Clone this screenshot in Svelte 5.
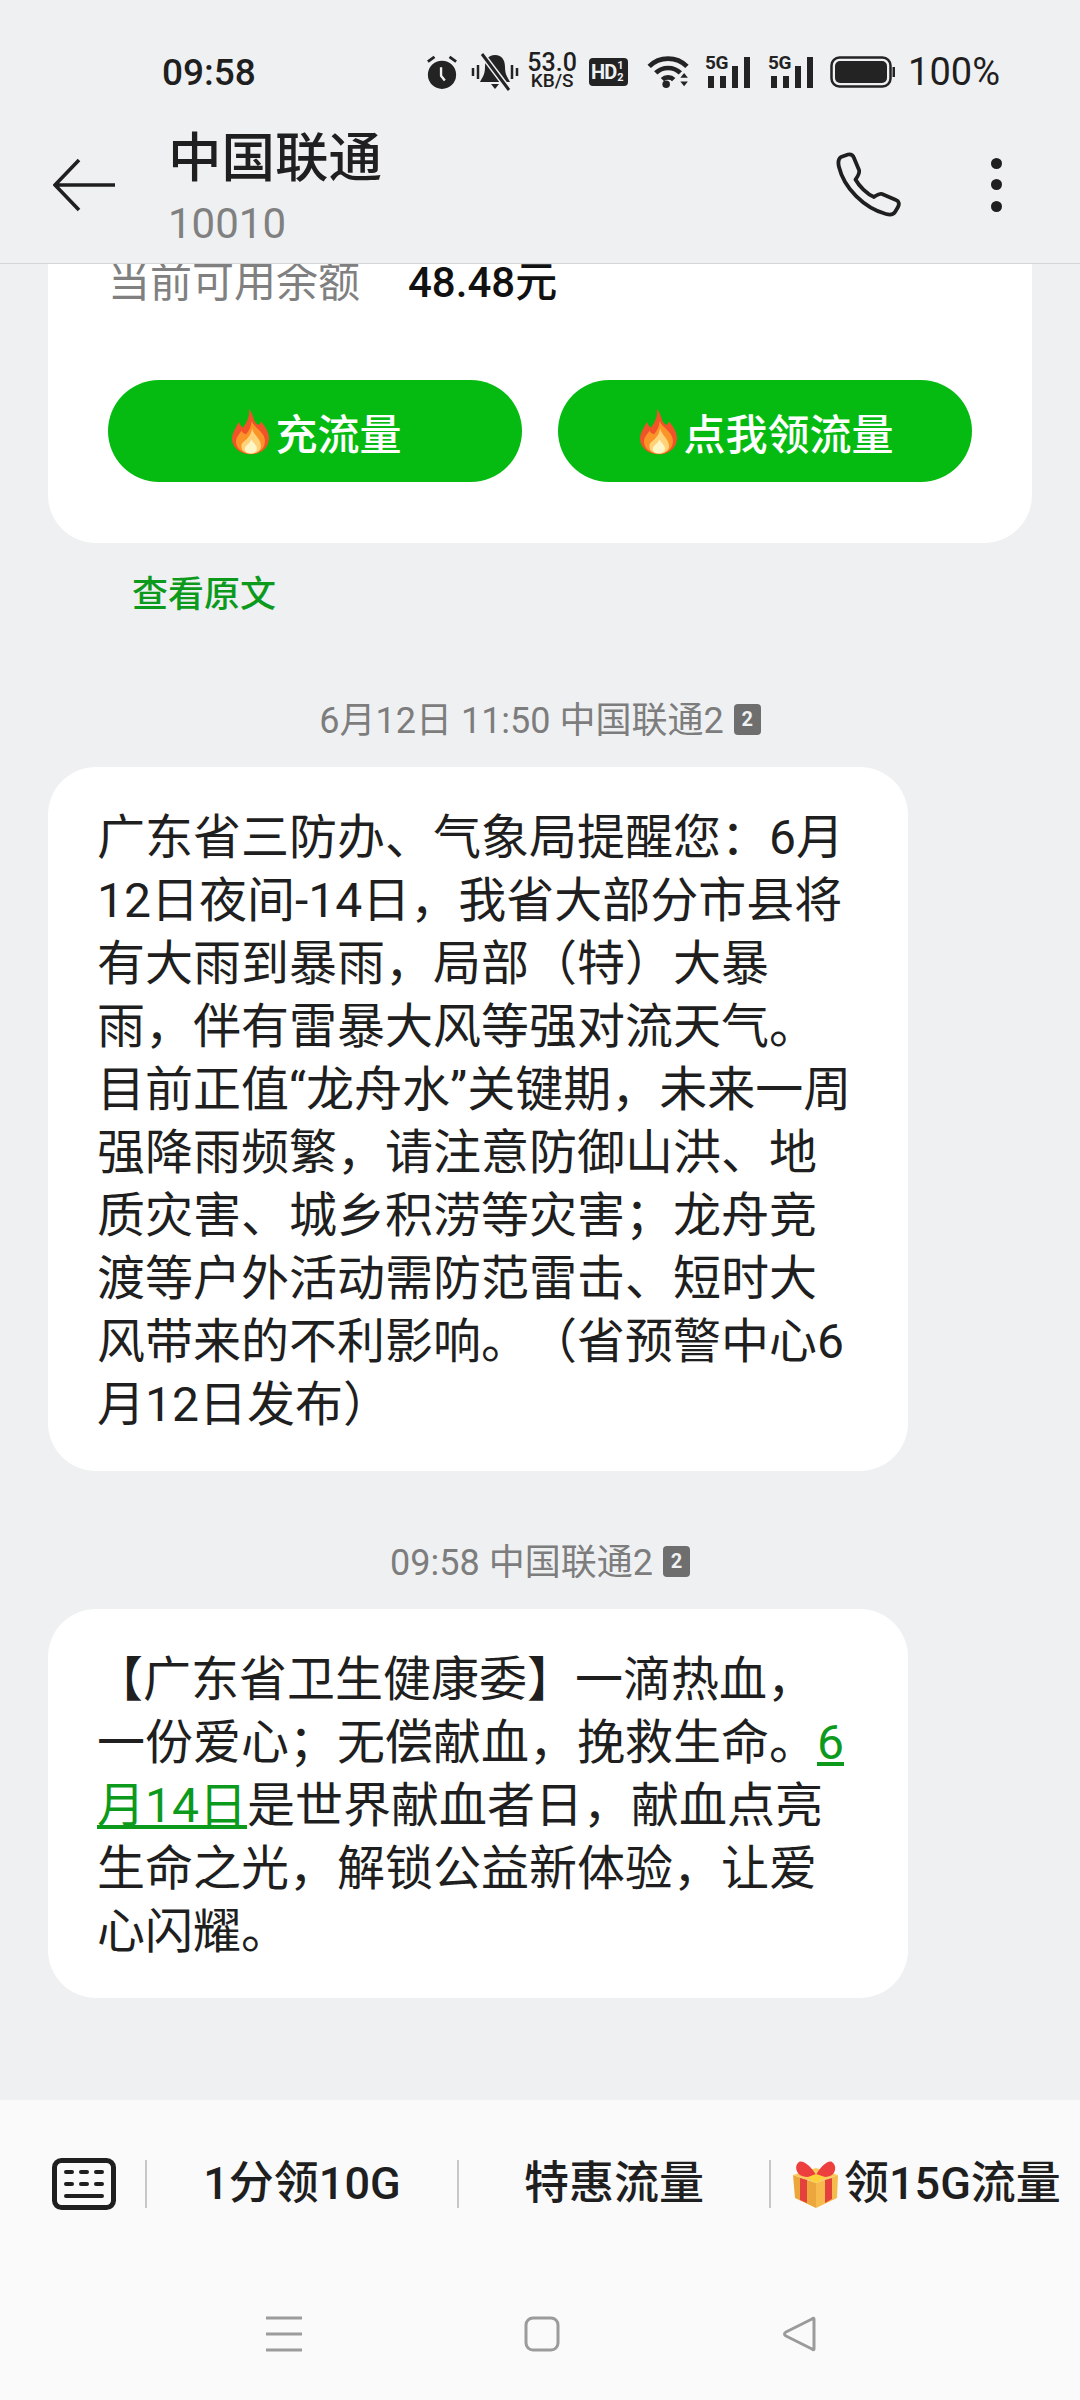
<script>
    const bubbleOne = [
        "广东省三防办、气象局提醒您：6月",
        "12日夜间-14日，我省大部分市县将",
        "有大雨到暴雨，局部（特）大暴",
        "雨，伴有雷暴大风等强对流天气。",
        "目前正值“龙舟水”关键期，未来一周",
        "强降雨频繁，请注意防御山洪、地",
        "质灾害、城乡积涝等灾害；龙舟竞",
        "渡等户外活动需防范雷击、短时大",
        "风带来的不利影响。（省预警中心6",
        "月12日发布）",
    ];
</script>

{#snippet flame()}
    <svg class="flame" viewBox="0 0 110 136" width="37" height="47">
        <path d="M50 0C66 20 62 34 74 46C80 50 84 46 86 38C100 54 111 72 110 90C108 118 84 136 56 136C26 136 2 118 0 92C-1 74 12 58 20 40C24 48 28 54 33 56C44 40 54 22 50 0Z" fill="#f0522a" />
        <path d="M58 36C64 56 98 68 98 96C98 120 78 134 56 134C32 134 12 120 12 98C12 84 22 76 28 66C32 72 36 76 42 76C50 66 58 54 58 36Z" fill="#fb9428" />
        <path d="M60 58C62 76 86 90 86 110C86 126 72 134 56 134C40 134 28 126 28 112C28 100 38 96 44 90C52 82 58 72 60 58Z" fill="#ffd27a" />
        <path d="M58 92C62 102 74 108 74 118C74 128 66 133 56 133C46 133 38 128 38 120C38 110 52 106 58 92Z" fill="#fff6c8" />
    </svg>
{/snippet}

{#snippet sim()}
    <span class="sim">2</span>
{/snippet}

{#snippet signal()}
    <span class="signal">
        <span class="five">5G</span>
        <svg viewBox="0 0 47 32" width="47" height="32">
            <rect x="4" y="20" width="6" height="12" />
            <rect x="16" y="20" width="6" height="12" />
            <rect x="28" y="10" width="6" height="22" />
            <rect x="40" y="1" width="6" height="31" />
        </svg>
    </span>
{/snippet}

<div class="phone">
    <header class="top">
        <div class="status">
            <span class="time">09:58</span>
            <div class="status-icons">
                <svg viewBox="0 0 34 36" width="32" height="34" fill="#232323">
                    <circle cx="17" cy="21" r="15" />
                    <path d="M2 7l7-5M32 7l-7-5" stroke="#232323" stroke-width="3" fill="none" />
                    <path d="M16 13v9l4 5" stroke="#f0f1f3" stroke-width="2.5" fill="none" />
                </svg>
                <svg class="bell" viewBox="0 0 48 38" width="48" height="38" fill="#232323">
                    <path d="M24 2c7 0 10 5 10 12 0 8 3 11 5 15H9c2-4 5-7 5-15 0-7 3-12 10-12z" />
                    <path d="M20 31h8l-4 5z" />
                    <path d="M11 1l27 36" stroke="#f0f1f3" stroke-width="6" />
                    <path d="M11 1l27 36" stroke="#232323" stroke-width="3" />
                    <path d="M2 15v8M7 12v14M41 12v14M46 15v8" stroke="#232323" stroke-width="2.5" />
                </svg>
                <span class="speed"><b>53.0</b><i>KB/S</i></span>
                <span class="hd">HD<span class="hd-frac"><em>1</em><em>2</em></span></span>
                <svg class="wifi" viewBox="0 0 46 36" width="44" height="34">
                    <path d="M2 12c11-11 29-11 40 0M9 19c7-7 19-7 26 0M16 26c3-3 9-3 12 0" stroke="#232323" stroke-width="5" fill="none" />
                    <circle cx="20" cy="31" r="4" fill="#232323" />
                    <path d="M35 24l4-5 4 5zM35 28l4 5 4-5z" fill="#232323" />
                </svg>
                {@render signal()}
                {@render signal()}
                <svg class="battery" viewBox="0 0 66 32" width="66" height="32">
                    <rect x="1.5" y="1.5" width="59" height="29" rx="8" fill="none" stroke="#232323" stroke-width="2.5" />
                    <rect x="5" y="5" width="52" height="22" rx="5" fill="#232323" />
                    <rect x="62.5" y="11" width="2.5" height="10" fill="#232323" />
                </svg>
                <span class="percent">100%</span>
            </div>
        </div>
        <div class="bar">
            <svg class="back" viewBox="0 0 64 54" width="64" height="54">
                <path d="M26 2L2 27l24 25M2 27h60" fill="none" stroke="#1f1f1f" stroke-width="3.6" />
            </svg>
            <div class="names">
                <div class="name">中国联通</div>
                <div class="number">10010</div>
            </div>
            <svg class="call" viewBox="0 0 66 66" width="66" height="66">
                <path d="M5 5L12 2.5C15 2 17 3 18 6L23 18C24 21 22 24 19.5 27.5C23 34 31 42 38 45C41 43 43 41 46 42L60 48C63 49 63.5 52 62 55L59 60C57.5 62.5 54 63 50 62C28 56 8 36 3 15C2 11 2 7 5 5Z" fill="none" stroke="#1f1f1f" stroke-width="3.8" stroke-linejoin="round" />
            </svg>
            <div class="dots"><i></i><i></i><i></i></div>
        </div>
    </header>

    <main class="thread">
        <section class="card">
            <div class="balance"><span class="label">当前可用余额</span><span class="amount">48.48元</span></div>
            <div class="actions">
                <button>{@render flame()}充流量</button>
                <button>{@render flame()}点我领流量</button>
            </div>
        </section>
        <div class="view-source">查看原文</div>

        <div class="meta first">6月12日 11:50 中国联通2{@render sim()}</div>
        <div class="bubble">
            {#each bubbleOne as line}
                <div>{line}</div>
            {/each}
        </div>

        <div class="meta">09:58 中国联通2{@render sim()}</div>
        <div class="bubble">
            <div class="hang">【广东省卫生健康委】一滴热血，</div>
            <div>一份爱心；无偿献血，挽救生命。<span class="link">6</span></div>
            <div><span class="link">月14日</span>是世界献血者日，献血点亮</div>
            <div>生命之光，解锁公益新体验，让爱</div>
            <div>心闪耀。</div>
        </div>
    </main>

    <footer class="bottom">
        <div class="quick">
            <svg class="keyboard" viewBox="0 0 64 52" width="64" height="52">
                <rect x="2.5" y="2.5" width="59" height="47" rx="7" fill="none" stroke="#1f1f1f" stroke-width="5" />
                <path d="M14 14h6M29 14h6M44 14h6M14 26h6M29 26h6M44 26h6M14 38h36" stroke="#1f1f1f" stroke-width="4" stroke-linecap="round" />
            </svg>
            <span class="chip one">1分领10G</span>
            <span class="chip two">特惠流量</span>
            <span class="chip three">
                <svg class="gift" viewBox="0 0 45 48" width="45" height="48">
                    <path d="M0 15L23 23V48L2 38Z" fill="#eba63c" />
                    <path d="M45 15L23 23V48L44 38Z" fill="#f6bb4c" />
                    <path d="M0 15L23 8L45 15L23 23Z" fill="#f9cb5e" />
                    <path d="M7 18L14 20V43L7 40Z" fill="#e5413c" />
                    <path d="M32 20L39 18V39L32 43Z" fill="#e5413c" />
                    <path d="M23 15C18 6 10 0 6 2C1 5 3 14 9 16C14 18 20 17 23 15C26 17 32 18 37 16C43 14 44 5 39 2C35 0 28 6 23 15Z" fill="#ee3f3f" />
                    <path d="M15 17L23 14L32 17L23 23Z" fill="#ffd23c" />
                </svg>领15G流量
            </span>
        </div>
        <nav class="nav">
            <svg viewBox="0 0 36 36" width="36" height="36">
                <path d="M0 2h36M0 18h36M0 34h36" stroke="#9b9b9b" stroke-width="3" />
            </svg>
            <svg viewBox="0 0 36 36" width="36" height="36">
                <rect x="2" y="2" width="32" height="32" rx="7" fill="none" stroke="#9b9b9b" stroke-width="3" />
            </svg>
            <svg viewBox="0 0 36 36" width="36" height="36">
                <path d="M32 3v30c0 1-1 1-2 0L4 20c-2-1-2-3 0-4L30 3c1-1 2-1 2 0z" fill="none" stroke="#9b9b9b" stroke-width="3" stroke-linejoin="round" />
            </svg>
        </nav>
    </footer>
</div>

<style>
    :global(body) {
        margin: 0;
        background: #eff0f2;
    }
    .phone {
        width: 1080px;
        height: 2400px;
        display: flex;
        flex-direction: column;
        overflow: hidden;
        font-family: Roboto, "Noto Sans CJK SC", sans-serif;
        color: #1f1f1f;
        background: #eff0f2;
        text-spacing-trim: space-all;
    }
    .top {
        height: 264px;
        box-sizing: border-box;
        border-bottom: 1px solid #d5d6d8;
        flex: none;
    }
    .status {
        height: 106px;
        padding: 38px 80px 0 162px;
        box-sizing: border-box;
        display: flex;
        align-items: center;
        justify-content: space-between;
    }
    .time {
        font-size: 37px;
        font-weight: 500;
    }
    .status-icons {
        display: flex;
        align-items: center;
        gap: 13px;
    }
    .bell {
        margin-right: -4px;
    }
    .speed {
        display: flex;
        flex-direction: column;
        align-items: center;
        width: 48px;
        font-weight: 500;
    }
    .speed b {
        font-size: 25px;
        line-height: 18px;
        font-weight: 500;
    }
    .speed i {
        font-size: 19px;
        line-height: 18px;
        font-style: normal;
    }
    .hd {
        display: flex;
        align-items: center;
        background: #232323;
        color: #f0f1f3;
        border-radius: 4px;
        height: 28px;
        width: 39px;
        box-sizing: border-box;
        padding: 0 2px;
        font-size: 20px;
        font-weight: 700;
        margin-right: 6px;
        letter-spacing: -1px;
    }
    .hd-frac {
        display: flex;
        flex-direction: column;
        line-height: 12px;
        font-size: 11px;
        margin-left: 1px;
    }
    .hd-frac em {
        font-style: normal;
    }
    .signal {
        display: flex;
        flex-direction: column;
        position: relative;
        width: 47px;
        height: 32px;
        padding-right: 3px;
    }
    .signal svg {
        fill: #232323;
        display: block;
    }
    .five {
        position: absolute;
        left: 1px;
        top: -3px;
        font-size: 19px;
        line-height: 20px;
        font-weight: 700;
        color: #232323;
        letter-spacing: -0.5px;
    }
    .percent {
        font-size: 38px;
        margin-left: -1px;
    }
    .bar {
        display: flex;
        align-items: center;
        height: 157px;
        padding-left: 53px;
    }
    .back {
        flex: none;
    }
    .names {
        margin-left: 51px;
        padding-top: 18px;
        flex: 1;
    }
    .name {
        font-size: 53.5px;
        line-height: 66px;
        font-weight: 500;
        margin-top: -12px;
    }
    .number {
        font-size: 42px;
        line-height: 52px;
        color: #808080;
        margin-top: 6px;
    }
    .call {
        flex: none;
        margin-right: 89px;
    }
    .dots {
        display: flex;
        flex-direction: column;
        gap: 10.5px;
        margin-right: 78px;
    }
    .dots i {
        width: 11px;
        height: 11px;
        border-radius: 50%;
        background: #1f1f1f;
    }
    .thread {
        flex: 1;
        overflow: hidden;
        padding: 0 48px;
    }
    .card {
        width: 984px;
        height: 302px;
        margin-top: -23px;
        box-sizing: border-box;
        background: #fff;
        border-radius: 0 0 48px 48px;
        padding: 0 60px;
    }
    .balance {
        display: flex;
        font-size: 42px;
        line-height: 60px;
        padding-top: 12px;
    }
    .label {
        color: #808080;
        width: 300px;
    }
    .amount {
        font-weight: 500;
        color: #111;
    }
    .actions {
        display: flex;
        gap: 36px;
        margin-top: 67px;
    }
    .actions button {
        width: 414px;
        height: 102px;
        border: none;
        border-radius: 51px;
        background: #05bb11;
        color: #fff;
        font: inherit;
        font-size: 42px;
        font-weight: 500;
        display: flex;
        align-items: center;
        justify-content: center;
    }
    .flame {
        margin-right: 6px;
        margin-left: 4px;
        flex: none;
    }
    .view-source {
        font-size: 36px;
        line-height: 50px;
        color: #0c9a1c;
        margin: 27px 0 0 84px;
        font-weight: 500;
    }
    .meta {
        display: flex;
        justify-content: center;
        align-items: center;
        gap: 10px;
        font-size: 36px;
        line-height: 48px;
        color: #7d7d7d;
        width: 984px;
        margin-top: 68px;
    }
    .meta.first {
        margin-top: 77px;
    }
    .sim {
        width: 27px;
        height: 31px;
        margin-top: -4px;
        border-radius: 4px;
        background: #6e6e6e;
        color: #f0f1f3;
        font-size: 20px;
        font-weight: 700;
        line-height: 31px;
        text-align: center;
    }
    .bubble {
        width: 860px;
        box-sizing: border-box;
        margin-top: 22px;
        padding: 39px 49px 35px;
        background: #fff;
        border-radius: 48px;
        font-size: 48px;
        line-height: 63px;
        white-space: nowrap;
    }
    .hang {
        margin-left: -2px;
    }
    .link {
        color: #0c9a1c;
        text-decoration: underline;
    }
    .bottom {
        flex: none;
        height: 300px;
        background: #fafafa;
        display: flex;
        flex-direction: column;
    }
    .quick {
        height: 168px;
        padding-left: 52px;
        display: flex;
        align-items: center;
    }
    .keyboard {
        flex: none;
        margin-right: 29px;
    }
    .chip {
        height: 48px;
        box-sizing: border-box;
        border-left: 2px solid #c8c8c8;
        display: flex;
        align-items: center;
        justify-content: center;
        font-size: 45px;
        font-weight: 500;
        white-space: nowrap;
        line-height: 48px;
    }
    .chip.one,
    .chip.two {
        width: 312px;
    }
    .chip.three {
        padding-left: 22px;
    }
    .gift {
        flex: none;
        margin-right: 6px;
    }
    .nav {
        flex: 1;
        display: flex;
        align-items: flex-start;
        padding: 48px 0 0 266px;
        gap: 222px;
    }
</style>
